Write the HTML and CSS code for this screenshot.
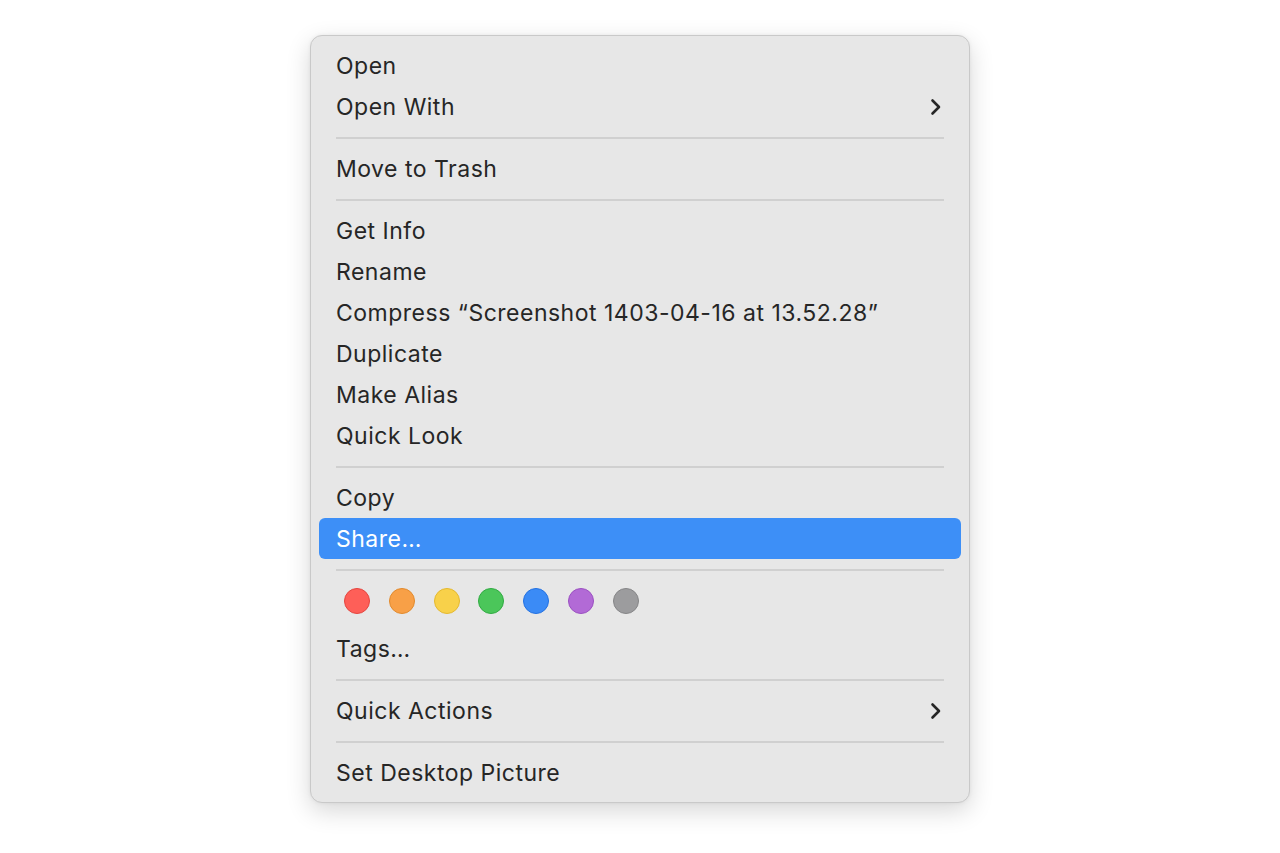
FILE: index.html
```html
<!DOCTYPE html>
<html>
<head>
<meta charset="utf-8">
<link rel="stylesheet" href="styles.css">
</head>
<body>
<div class="menu">
  <div class="item">Open</div>
  <div class="item">Open With<svg class="chev" viewBox="0 0 12 18"><path d="M2.5 2.5 L9 9 L2.5 15.5"/></svg></div>
  <div class="sep"></div>
  <div class="item">Move to Trash</div>
  <div class="sep"></div>
  <div class="item">Get Info</div>
  <div class="item">Rename</div>
  <div class="item">Compress “Screenshot 1403-04-16 at 13.52.28”</div>
  <div class="item">Duplicate</div>
  <div class="item">Make Alias</div>
  <div class="item">Quick Look</div>
  <div class="sep"></div>
  <div class="item">Copy</div>
  <div class="item active">Share…</div>
  <div class="sep"></div>
  <div class="dots">
    <span class="dot red"></span>
    <span class="dot orange"></span>
    <span class="dot yellow"></span>
    <span class="dot green"></span>
    <span class="dot blue"></span>
    <span class="dot purple"></span>
    <span class="dot gray"></span>
  </div>
  <div class="item">Tags…</div>
  <div class="sep"></div>
  <div class="item">Quick Actions<svg class="chev" viewBox="0 0 12 18"><path d="M2.5 2.5 L9 9 L2.5 15.5"/></svg></div>
  <div class="sep"></div>
  <div class="item">Set Desktop Picture</div>
</div>
</body>
</html>
```
FILE: styles.css
```css
html, body {
  margin: 0;
  background: #ffffff;
}
body {
  padding: 35px 0 50px;
  font-family: Inter, "Noto Sans", "Liberation Sans", sans-serif;
}
.menu {
  box-sizing: border-box;
  width: 660px;
  margin: 0 auto;
  padding: 9px 8px 9px;
  background: #e7e7e7;
  border: 1px solid #c9c9c9;
  border-radius: 12px;
  box-shadow: 0 8px 24px rgba(0, 0, 0, 0.16), 0 0 4px rgba(0, 0, 0, 0.06);
}
.item {
  height: 41px;
  display: flex;
  align-items: center;
  justify-content: space-between;
  padding: 0 19px 0 17px;
  font-size: 23px;
  letter-spacing: 0.5px;
  color: #262626;
  border-radius: 6px;
}
.item.active {
  background: #3d8ff7;
  color: #ffffff;
}
.chev {
  width: 12px;
  height: 18px;
  fill: none;
  stroke: #262626;
  stroke-width: 2.6;
  stroke-linecap: round;
  stroke-linejoin: round;
}
.sep {
  height: 21px;
  display: flex;
  align-items: center;
  padding: 0 17px;
}
.sep::before {
  content: "";
  flex: 1;
  height: 2px;
  background: #d0d0d0;
}
.dots {
  height: 48px;
  display: flex;
  align-items: flex-start;
  gap: 18.8px;
  padding: 8px 0 0 25px;
  box-sizing: border-box;
}
.dot {
  width: 26px;
  height: 26px;
  box-sizing: border-box;
  border-radius: 50%;
  border: 1.5px solid;
}
.red { background: #fe5f58; border-color: #e5453f; }
.orange { background: #f8a047; border-color: #e28a2c; }
.yellow { background: #f8d14a; border-color: #e5b92e; }
.green { background: #4bc65a; border-color: #30ab42; }
.blue { background: #3b8bf6; border-color: #2371e2; }
.purple { background: #b26ad6; border-color: #9b50c2; }
.gray { background: #9c9c9e; border-color: #858587; }
```
